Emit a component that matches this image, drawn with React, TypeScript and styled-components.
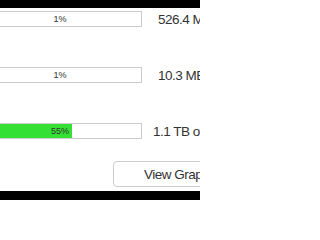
import React from "react";
import styled, { createGlobalStyle } from "styled-components";

const Global = createGlobalStyle`
  html, body { margin: 0; padding: 0; background: #fff; }
  body { font-family: "Liberation Sans", Arial, sans-serif; color: #333; overflow: hidden; }
`;

const Page = styled.div`
  width: 200px;
  height: 200px;
  overflow: hidden;
  display: flex;
  flex-direction: column;
  background: #fff;
`;

const BlackBar = styled.div<{ $h: number }>`
  height: ${(p) => p.$h}px;
  background: #000;
  flex-shrink: 0;
`;

const Content = styled.div`
  flex: 1;
  display: flex;
  flex-direction: column;
  padding-top: 3px;
  gap: 40px;
`;

const Row = styled.div`
  display: flex;
  align-items: center;
  height: 16px;
  white-space: nowrap;
`;

const Progress = styled.div`
  position: relative;
  box-sizing: border-box;
  flex-shrink: 0;
  width: 164px;
  height: 16px;
  margin-left: -22px;
  border: 1px solid #cccccc;
  background: #fff;
`;

const Fill = styled.div`
  height: 100%;
  background: #33e033;
`;

const ProgressText = styled.span`
  position: absolute;
  inset: 0;
  display: flex;
  align-items: center;
  justify-content: center;
  font-size: 9px;
  color: #333;
`;

const Label = styled.span<{ $offset: number }>`
  margin-left: ${(p) => p.$offset}px;
  font-size: 13.5px;
  letter-spacing: -0.5px;
  color: #333;
`;

const ButtonRow = styled.div`
  display: flex;
  margin-top: -18px;
  padding-left: 113px;
  height: 30px;
`;

const Button = styled.button`
  box-sizing: border-box;
  flex-shrink: 0;
  width: 130px;
  height: 26px;
  border: 1px solid #cccccc;
  border-radius: 4px;
  background: #fff;
  font-family: "Liberation Sans", Arial, sans-serif;
  font-size: 13.5px;
  letter-spacing: -0.5px;
  color: #333;
  padding: 0 0 0 30px;
  text-align: left;
  white-space: nowrap;
`;

const rows = [
  { pct: 1, fill: 0, label: "526.4 MB", offset: 16 },
  { pct: 1, fill: 0, label: "10.3 MB", offset: 16 },
  { pct: 55, fill: 57.3, label: "1.1 TB of 2.0 TB", offset: 11 },
];

export default function App() {
  return (
    <>
      <Global />
      <Page>
        <BlackBar $h={8} />
        <Content>
          {rows.map((r, i) => (
            <Row key={i}>
              <Progress>
                <Fill style={{ width: `${r.fill}%` }} />
                <ProgressText>{r.pct}%</ProgressText>
              </Progress>
              <Label $offset={r.offset}>{r.label}</Label>
            </Row>
          ))}
          <ButtonRow>
            <Button>View Graph</Button>
          </ButtonRow>
        </Content>
        <BlackBar $h={9} />
      </Page>
    </>
  );
}
